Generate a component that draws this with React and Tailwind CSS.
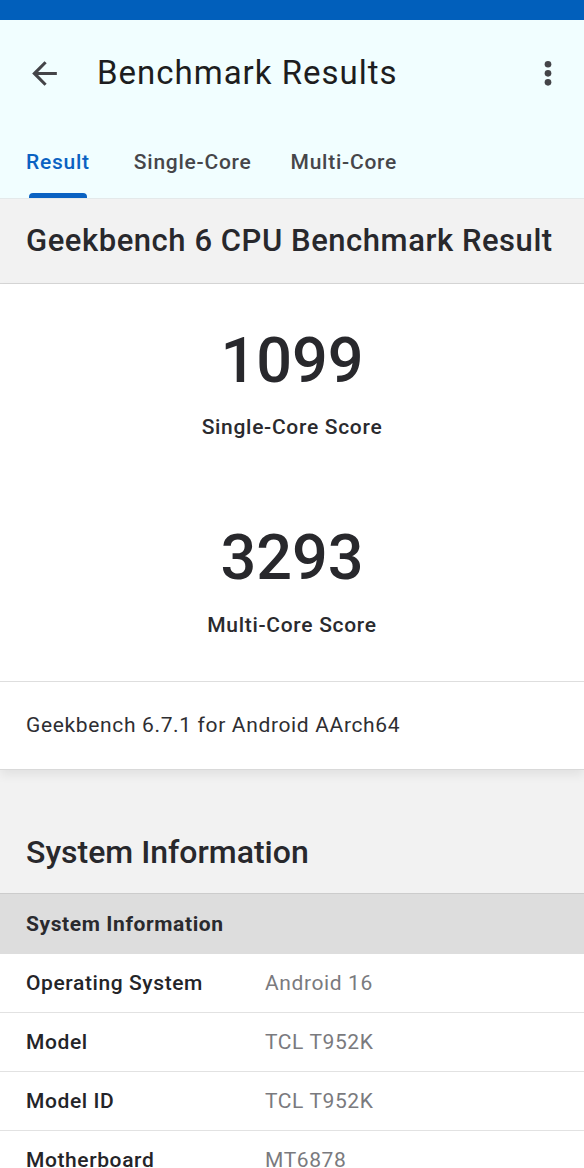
import React from "react";

const rows = [
    { label: "Operating System", value: "Android 16" },
    { label: "Model", value: "TCL T952K" },
    { label: "Model ID", value: "TCL T952K" },
    { label: "Motherboard", value: "MT6878" },
];

const BackIcon = () => (
    <svg viewBox="0 0 24 24" className="w-[37px] h-[37px]" fill="#444448">
        <path d="M20 11H7.83l5.59-5.59L12 4l-8 8 8 8 1.41-1.41L7.83 13H20v-2z" />
    </svg>
);

const MoreIcon = () => (
    <svg viewBox="0 0 24 24" className="w-[38px] h-[38px]" fill="#444448">
        <circle cx="12" cy="6.5" r="2.1" />
        <circle cx="12" cy="12.2" r="2.1" />
        <circle cx="12" cy="17.9" r="2.1" />
    </svg>
);

const Tab = ({ label, active }) => (
    <div className="relative h-full flex items-center pt-[2px]">
        <span className={`text-[21px] tracking-[0.75px] font-medium ${active ? "text-[#0a62c2]" : "text-[#46464a]"}`}>{label}</span>
        {active && <div className="absolute bottom-0 left-[3px] right-[3px] h-[5px] rounded-t-[4px] bg-[#0a62c2]" />}
    </div>
);

const App = () => {
    return (
        <div className="w-[584px] h-[1168px] overflow-hidden bg-[#f2f2f2] text-[#2a2a2e]" style={{ fontFamily: "Roboto, 'Noto Sans', sans-serif" }}>
            <div className="h-[20px] bg-[#015fbb]" />

            <div className="bg-[#f1feff]">
                <div className="h-[106px] flex items-center pl-[26px] pr-[17px]">
                    <BackIcon />
                    <span className="ml-[34px] text-[33px] tracking-[1px] text-[#1d1d20]">Benchmark Results</span>
                    <div className="ml-auto">
                        <MoreIcon />
                    </div>
                </div>
                <div className="h-[72px] flex pl-[26px]">
                    <Tab label="Result" active />
                    <div className="ml-[44px] h-full"><Tab label="Single-Core" /></div>
                    <div className="ml-[39px] h-full"><Tab label="Multi-Core" /></div>
                </div>
            </div>

            <div className="h-[86px] flex items-center px-[26px] pt-[1px] border-t border-[#e4e9ea] border-b border-b-[#d6d6d6]">
                <span className="text-[31px] tracking-[0.55px] font-medium text-[#28282c]">Geekbench 6 CPU Benchmark Result</span>
            </div>

            <div className="relative z-10 bg-white border-b border-[#d9d9d9] shadow-[0_5px_10px_rgba(0,0,0,0.07)]">
                <div className="flex flex-col items-center pt-[36px] pb-[41px]">
                    <div className="h-[80px] flex items-center text-[63px] font-medium leading-none text-[#28282c]">1099</div>
                    <div className="mt-[14px] h-[28px] flex items-center text-[21px] tracking-[0.7px] font-medium">Single-Core Score</div>
                    <div className="mt-[75px] h-[80px] flex items-center text-[63px] font-medium leading-none text-[#28282c]">3293</div>
                    <div className="mt-[15px] h-[28px] flex items-center text-[21px] tracking-[0.7px] font-medium">Multi-Core Score</div>
                </div>
                <div className="h-[88px] flex items-center px-[26px] pt-[1px] border-t border-[#dedede] text-[21px] tracking-[0.65px] text-[#2e2e32]">
                    Geekbench 6.7.1 for Android AArch64
                </div>
            </div>

            <div className="h-[123px] flex items-end px-[26px] pb-[21px]">
                <span className="h-[40px] flex items-center text-[32px] font-medium text-[#28282c]">System Information</span>
            </div>

            <div className="h-[61px] flex items-center px-[26px] pt-[1px] bg-[#dddddd] border-t border-[#cccccc] text-[21px] tracking-[0.6px] font-bold text-[#2a2a2e]">
                System Information
            </div>

            <div className="bg-white">
                {rows.map((row, index) =>
                    <div key={index} className="h-[59px] flex items-center px-[26px] pt-[1px] border-b border-[#e2e2e2] text-[21px] tracking-[0.6px]">
                        <span className="w-[239px] font-medium text-[#242428]">{row.label}</span>
                        <span className="text-[#7a7a7e]">{row.value}</span>
                    </div>
                )}
            </div>
        </div>
    );
}

export default App;
